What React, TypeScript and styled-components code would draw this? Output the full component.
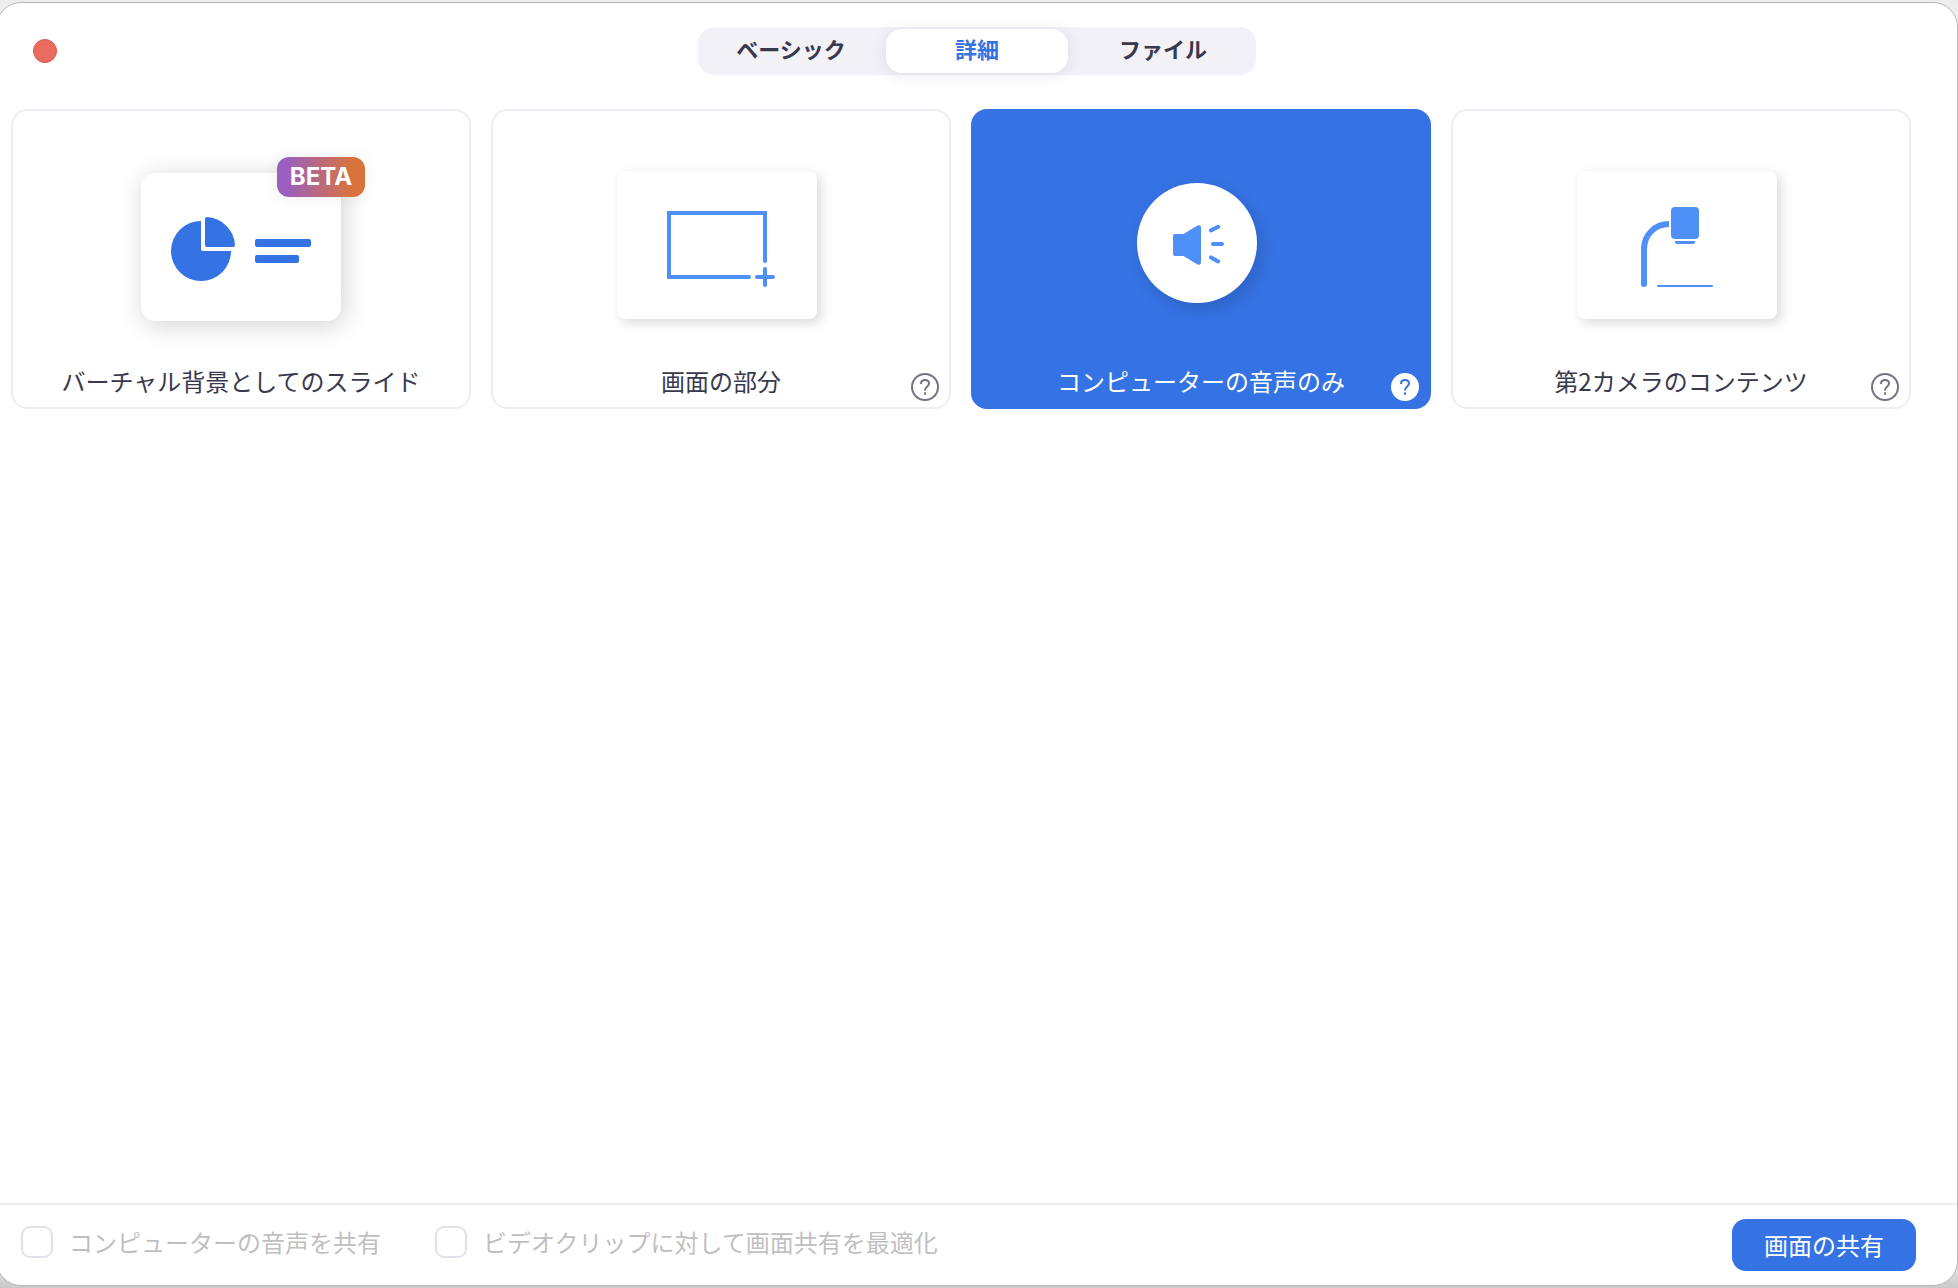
import React, { useState } from "react";
import styled, { createGlobalStyle, css } from "styled-components";

const color = {
  text: "#39394d",
  muted: "#bfbfbf",
  line: "#ededf4",
  box: "#e2e1ea",
  help: "#747487",
  primary: "#3572e3",
  drawing: "#4e8ff8",
};

const GlobalStyle = createGlobalStyle`
  *, *::before, *::after { box-sizing: border-box; }
  body {
    margin: 0;
    color: ${color.text};
    font-family: "Noto Sans CJK JP", "Noto Sans", sans-serif;
  }
  button, input { margin: 0; font: inherit; color: inherit; }
`;

const Desktop = styled.div`
  display: flex;
  min-height: 100vh;
  padding: 2px 0;
  overflow: hidden;
  background: linear-gradient(#ececec 0, #f2f2f2 24px, #e4e4e4 calc(100% - 24px), #cacaca 100%);
`;

const Window = styled.main`
  flex: 1;
  display: flex;
  flex-direction: column;
  margin-left: -4px;
  border: 1px solid #b6b6b6;
  border-radius: 25px;
  background: #fff;
`;

const Header = styled.header`
  display: grid;
  grid-template-columns: 1fr auto 1fr;
  align-items: center;
  padding: 24px 36px 34px;
`;

const CloseButton = styled.button`
  width: 24px;
  height: 24px;
  padding: 0;
  border: 1px solid #d9584d;
  border-radius: 50%;
  background: #ec6b60;
`;

const Tabs = styled.div`
  display: flex;
  gap: 4px;
  padding: 2px;
  border-radius: 16px;
  background: #f2f1f6;
`;

const Tab = styled.button<{ $active: boolean }>`
  width: 182px;
  height: 44px;
  padding: 0 0 6px;
  border: 0;
  border-radius: 16px;
  background: none;
  font-size: 22px;
  line-height: 32px;
  font-weight: 700;
  ${({ $active }) =>
    $active &&
    css`
      background: #fff;
      color: ${color.primary};
      box-shadow: 0 2px 16px rgba(40, 40, 70, 0.1);
    `}
`;

const Cards = styled.section`
  flex: 1;
  display: grid;
  grid-template-columns: repeat(4, minmax(0, 1fr));
  align-content: start;
  gap: 20px;
  padding: 0 46px 20px 14px;
`;

const Card = styled.div`
  position: relative;
  display: flex;
`;

const CardButton = styled.button<{ $selected: boolean }>`
  flex: 1;
  display: flex;
  flex-direction: column;
  padding: 0 0 10px;
  border: 2px solid ${({ $selected }) => ($selected ? color.primary : color.line)};
  border-radius: 16px;
  background: ${({ $selected }) => ($selected ? color.primary : "#fff")};
  color: ${({ $selected }) => ($selected ? "#fff" : color.text)};
`;

const Art = styled.span<{ $centered?: boolean }>`
  display: flex;
  align-items: center;
  justify-content: center;
  align-self: stretch;
  height: 254px;
  padding: ${({ $centered }) => ($centered ? "18px 0 0" : "14px 8px 0 0")};
`;

const CardLabel = styled.span`
  align-self: stretch;
  text-align: center;
  font-size: 24px;
  line-height: 32px;
`;

const Thumb = styled.span<{ $deep?: boolean }>`
  position: relative;
  display: block;
  width: 200px;
  height: 148px;
  border-radius: ${({ $deep }) => ($deep ? 14 : 8)}px;
  background: #fff;
  box-shadow: ${({ $deep }) =>
    $deep ? "3px 4px 26px rgba(0, 0, 0, 0.18)" : "4px 4px 12px rgba(0, 0, 0, 0.15)"};
`;

const Disc = styled.span`
  display: block;
  width: 120px;
  height: 120px;
  margin-bottom: 4px;
  border-radius: 50%;
  background: #fff;
  box-shadow: 4px 6px 16px rgba(0, 0, 0, 0.14);
`;

const Drawing = styled.svg`
  display: block;
  width: 100%;
  height: 100%;
`;

const Badge = styled.span`
  position: absolute;
  top: -16px;
  right: -24px;
  width: 88px;
  border-radius: 12px;
  background: linear-gradient(90deg, #9b5fc0 10%, #d9733d 85%);
  box-shadow: 0 0 16px rgba(0, 0, 0, 0.08);
  color: #fff;
  font-family: Inter, "Noto Sans", sans-serif;
  font-size: 24px;
  line-height: 40px;
  font-weight: 700;
  text-align: center;
`;

const HelpButton = styled.button<{ $selected: boolean }>`
  position: absolute;
  right: 12px;
  bottom: 8px;
  width: 28px;
  height: 28px;
  padding: 0;
  border: 2px solid ${({ $selected }) => ($selected ? "#fff" : color.help)};
  border-radius: 50%;
  background: ${({ $selected }) => ($selected ? "#fff" : "transparent")};
  color: ${({ $selected }) => ($selected ? color.primary : color.help)};
`;

const Footer = styled.footer`
  display: flex;
  align-items: center;
  justify-content: space-between;
  padding: 14px 41px 14px 24px;
  border-top: 2px solid ${color.line};
`;

const Options = styled.div`
  display: flex;
  gap: 54px;
  padding-bottom: 6px;
`;

const Option = styled.label`
  display: flex;
  align-items: center;
  gap: 16px;
  color: ${color.muted};
  font-size: 24px;
  line-height: 32px;
`;

const Checkbox = styled.input`
  appearance: none;
  width: 32px;
  height: 32px;
  border: 2px solid ${color.box};
  border-radius: 9px;
  background: #fff;
`;

const ShareButton = styled.button`
  width: 184px;
  height: 52px;
  padding: 0;
  border: 0;
  border-radius: 14px;
  background: ${color.primary};
  color: #fff;
  font-size: 24px;
  line-height: 32px;
`;

const SlideArt = () => (
  <Art $centered>
    <Thumb $deep>
      <Drawing viewBox="0 0 200 148" fill={color.primary} aria-hidden="true">
        <path d="M60 48 A30 30 0 1 0 90 78 H62 Q60 78 60 76 Z" />
        <path d="M64 46 Q64 44 66 44 A30 30 0 0 1 94 72 Q94 74 92 74 H66 Q64 74 64 72 Z" />
        <rect x="114" y="66" width="56" height="8" rx="2" />
        <rect x="114" y="82" width="44" height="8" rx="2" />
      </Drawing>
      <Badge>BETA</Badge>
    </Thumb>
  </Art>
);

const PortionArt = () => (
  <Art>
    <Thumb>
      <Drawing
        viewBox="0 0 200 148"
        fill="none"
        stroke={color.drawing}
        strokeWidth="4"
        strokeLinecap="round"
        aria-hidden="true"
      >
        <path d="M148 90 V42 H52 V106 H132" />
        <path d="M148 98 V114 M140 106 H156" />
      </Drawing>
    </Thumb>
  </Art>
);

const AudioArt = () => (
  <Art>
    <Disc>
      <Drawing viewBox="0 0 120 120" aria-hidden="true">
        <path
          fill={color.drawing}
          d="M38 51 H46.5 L60.5 42.6 Q64 41 64 45 V79 Q64 83 60.5 81.4 L46.5 73 H38 Q36 73 36 71 V53 Q36 51 38 51 Z"
        />
        <path
          fill="none"
          stroke={color.drawing}
          strokeWidth="4"
          strokeLinecap="round"
          d="M74 47.4 L81.2 43.8 M76 61 H85 M74 74.4 L81.2 78.4"
        />
      </Drawing>
    </Disc>
  </Art>
);

const CameraArt = () => (
  <Art>
    <Thumb>
      <Drawing viewBox="0 0 200 148" fill={color.drawing} aria-hidden="true">
        <rect x="94" y="36" width="28" height="32" rx="4" />
        <path d="M98 70 H118 V71 Q118 73 116 73 H100 Q98 73 98 71 Z" />
        <path d="M67 78 C67 64 78 53 92 53" fill="none" stroke={color.drawing} strokeWidth="6" />
        <path d="M67 77 V113" stroke={color.drawing} strokeWidth="6" strokeLinecap="round" />
        <rect x="80" y="114" width="56" height="2" rx="1" />
      </Drawing>
    </Thumb>
  </Art>
);

const QuestionMark = () => (
  <Drawing viewBox="0 0 24 24" fill="none" aria-hidden="true">
    <path
      d="M8 9 C8 6.6 9.6 5 12 5 C14.4 5 16 6.5 16 8.6 C16 11.4 12 11.6 12 15.4"
      stroke="currentColor"
      strokeWidth="2"
    />
    <rect x="11" y="17.4" width="2" height="2.4" fill="currentColor" />
  </Drawing>
);

const tabs = ["ベーシック", "詳細", "ファイル"];

const sources = [
  { label: "バーチャル背景としてのスライド", Picture: SlideArt, help: false },
  { label: "画面の部分", Picture: PortionArt, help: true },
  { label: "コンピューターの音声のみ", Picture: AudioArt, help: true },
  { label: "第2カメラのコンテンツ", Picture: CameraArt, help: true },
];

const options = ["コンピューターの音声を共有", "ビデオクリップに対して画面共有を最適化"];

export default function App() {
  const [tab, setTab] = useState(1);
  const [source, setSource] = useState(2);

  return (
    <Desktop>
      <GlobalStyle />
      <Window>
        <Header>
          <CloseButton type="button" aria-label="閉じる" />
          <Tabs role="tablist">
            {tabs.map((name, i) => (
              <Tab
                key={name}
                type="button"
                role="tab"
                aria-selected={i === tab}
                $active={i === tab}
                onClick={() => setTab(i)}
              >
                {name}
              </Tab>
            ))}
          </Tabs>
        </Header>
        <Cards>
          {sources.map(({ label, Picture, help }, i) => (
            <Card key={label}>
              <CardButton
                type="button"
                aria-pressed={i === source}
                $selected={i === source}
                onClick={() => setSource(i)}
              >
                <Picture />
                <CardLabel>{label}</CardLabel>
              </CardButton>
              {help && (
                <HelpButton type="button" aria-label="ヘルプ" $selected={i === source}>
                  <QuestionMark />
                </HelpButton>
              )}
            </Card>
          ))}
        </Cards>
        <Footer>
          <Options>
            {options.map((name) => (
              <Option key={name}>
                <Checkbox type="checkbox" disabled />
                {name}
              </Option>
            ))}
          </Options>
          <ShareButton type="button">画面の共有</ShareButton>
        </Footer>
      </Window>
    </Desktop>
  );
}
